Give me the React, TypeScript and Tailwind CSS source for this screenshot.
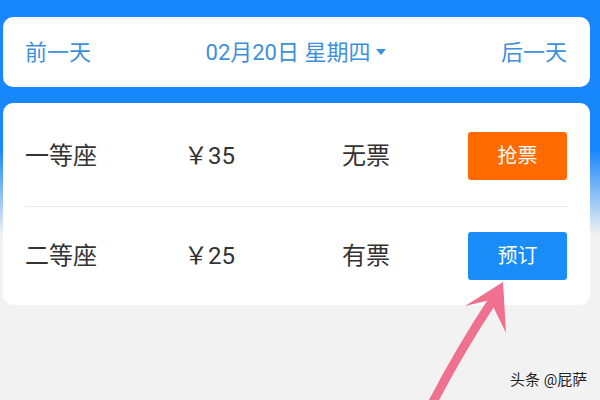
const font = { fontFamily: 'Roboto, "Noto Sans CJK SC", sans-serif' };

const SeatRow = ({
  name,
  price,
  status,
  action,
  orange,
}: {
  name: string;
  price: string;
  status: string;
  action: string;
  orange?: boolean;
}) => (
  <div className="flex items-center pl-[22px] pr-[23px] h-full">
    <div className="w-[159px] text-[24px] text-[#333]">{name}</div>
    <div className="w-[158px] text-[24px] text-[#333]">{price}</div>
    <div className="flex-1 text-[24px] text-[#333]">{status}</div>
    <button
      className={
        orange
          ? "w-[99px] h-[48px] rounded-[3px] bg-[#ff6b00] text-white text-[20px]"
          : "w-[99px] h-[48px] rounded-[3px] bg-[#1a8cf7] text-white text-[20px]"
      }
    >
      {action}
    </button>
  </div>
);

export default function App() {
  return (
    <div
      className="relative w-[600px] h-[400px] overflow-hidden bg-[linear-gradient(to_bottom,#1787fb_0px,#1787fb_150px,#f2f2f2_235px,#f2f2f2_100%)]"
      style={font}
    >
      <div className="pt-[17px] pl-[3px] pr-[10px]">
        {/* date bar */}
        <div className="h-[70px] bg-white rounded-[10px] flex items-center justify-between pl-[22px] pr-[23px] text-[#3d8fe0] text-[22px]">
          <span>前一天</span>
          <span className="flex items-center">
            02月20日 星期四
            <svg width="10" height="6" viewBox="0 0 10 6" className="ml-[6px]">
              <path d="M0 0 L10 0 L5 6 Z" fill="#3d8fe0" />
            </svg>
          </span>
          <span>后一天</span>
        </div>

        {/* seat list */}
        <div className="mt-[16px] h-[202px] bg-white rounded-[10px] flex flex-col">
          <div className="h-[103px] pt-[3px]">
            <SeatRow name="一等座" price="￥35" status="无票" action="抢票" orange />
          </div>
          <div className="mx-[22px] h-px bg-[#eaeaea]" />
          <div className="flex-1">
            <SeatRow name="二等座" price="￥25" status="有票" action="预订" />
          </div>
        </div>
      </div>

      {/* annotation arrow */}
      <svg className="absolute left-0 top-0" width="600" height="400" viewBox="0 0 600 400">
        <path d="M433 402 Q460 350 493 300" stroke="#f0708f" strokeWidth="9" fill="none" />
        <path d="M503 282 L465 306 L490 300 L506 333 Z" fill="#f0708f" />
      </svg>

      <div className="absolute left-[510px] top-[369px] text-[15px] text-[#222] [text-shadow:0_0_2px_#fff]">
        头条 @屁萨
      </div>
    </div>
  );
}
